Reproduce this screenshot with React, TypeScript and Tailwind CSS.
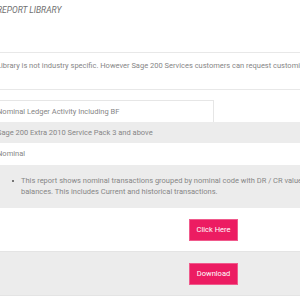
export default function App() {
  return (
    <div className="w-[300px] h-[300px] overflow-hidden bg-white font-['Roboto',sans-serif] text-[#868686] text-[7.5px] leading-none">
      <div className="-ml-[3px] w-[420px]">
        {/* Page heading */}
        <div className="h-[52px] pt-[6px]">
          <h1 className="italic text-[8.5px] text-[#707070] uppercase">Report Library</h1>
        </div>

        {/* Intro */}
        <div className="h-[38px] border-y border-[#e8e8e8] pt-[9px] whitespace-nowrap">
          Library is not industry specific. However Sage 200 Services customers can request customised reports.
        </div>

        <div className="h-[10px]" />

        {/* Report details */}
        <div className="w-[217px] h-[22px] border-t border-r border-[#e6e6e6] flex items-center whitespace-nowrap">
          Nominal Ledger Activity Including BF
        </div>
        <div className="h-[21px] bg-[#ececec] flex items-center whitespace-nowrap">
          Sage 200 Extra 2010 Service Pack 3 and above
        </div>
        <div className="h-[22px] flex items-center whitespace-nowrap">Nominal</div>
        <div className="h-[43px] bg-[#ececec] pt-[10px] pl-[15px]">
          <div className="flex items-start gap-[7px]">
            <span className="mt-[5px] w-[2px] h-[2px] bg-[#777] shrink-0" />
            <p className="w-[295px] leading-[11px]">
              This report shows nominal transactions grouped by nominal code with DR / CR values balances. This includes Current and historical transactions.
            </p>
          </div>
        </div>
        <div className="h-[44px] border-b border-[#e4e4e4] flex items-center pl-[192px]">
          <button className="w-[49px] h-[22px] bg-[#ec1c62] text-white text-[7.5px] border border-[#f05a8c]">Click Here</button>
        </div>
        <div className="h-[44px] bg-[#ececec] border-b border-[#e4e4e4] flex items-center pl-[192px]">
          <button className="w-[49px] h-[22px] bg-[#ec1c62] text-white text-[7.5px] border border-[#f05a8c]">Download</button>
        </div>
      </div>
    </div>
  );
}
